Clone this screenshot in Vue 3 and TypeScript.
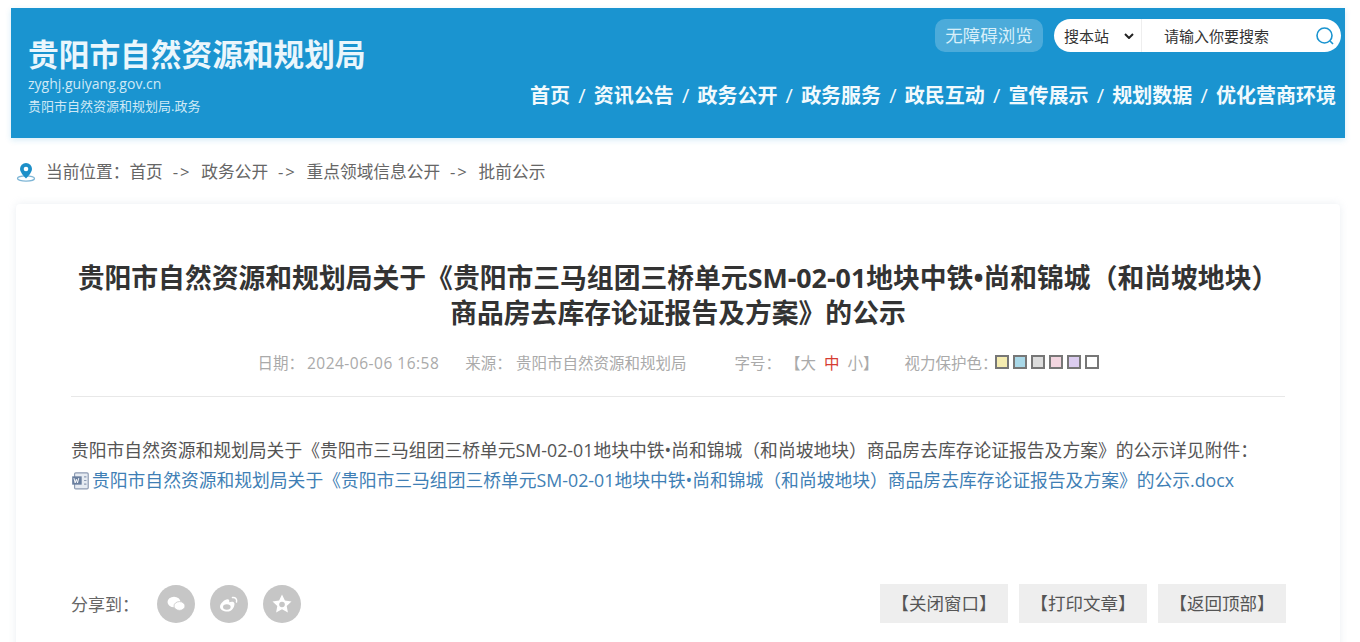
<script setup lang="ts">
const navItems = ['首页', '资讯公告', '政务公开', '政务服务', '政民互动', '宣传展示', '规划数据', '优化营商环境']
const crumbs = ['首页', '政务公开', '重点领域信息公开', '批前公示']
const swatches = ['#f5ecb0', '#a9d8e8', '#dddddd', '#f3d6e0', '#dccdf0', '#ffffff']
const actions = ['【关闭窗口】', '【打印文章】', '【返回顶部】']
const fullTitle = '贵阳市自然资源和规划局关于《贵阳市三马组团三桥单元SM-02-01地块中铁•尚和锦城（和尚坡地块）商品房去库存论证报告及方案》的公示'
</script>

<template>
  <div class="page">
    <header class="banner">
      <div class="brand">
        <h1 class="brand__name">贵阳市自然资源和规划局</h1>
        <div class="brand__url">zyghj.guiyang.gov.cn</div>
        <div class="brand__sub">贵阳市自然资源和规划局.政务</div>
      </div>
      <div class="banner__right">
        <div class="tools">
          <span class="tools__access">无障碍浏览</span>
          <div class="search">
            <span class="search__scope">搜本站
              <svg class="search__caret" viewBox="0 0 10 6" aria-hidden="true"><path d="M1 1l4 4 4-4" fill="none" stroke="#222" stroke-width="2" /></svg>
            </span>
            <span class="search__input">请输入你要搜索</span>
            <svg class="search__icon" viewBox="0 0 20 20" fill="none" stroke="#1a94d0" stroke-width="1.6" aria-hidden="true">
              <circle cx="9.5" cy="9.5" r="7.5" />
              <path d="M15 15l3 3" />
            </svg>
          </div>
        </div>
        <nav class="nav">
          <template v-for="(item, i) in navItems" :key="item">
            <span v-if="i > 0" class="nav__sep">/</span>
            <a class="nav__link">{{ item }}</a>
          </template>
        </nav>
      </div>
    </header>

    <div class="crumbs">
      <svg class="crumbs__pin" viewBox="0 0 20 20" aria-hidden="true">
        <ellipse cx="10" cy="16.5" rx="8.5" ry="2.6" fill="none" stroke="#7fb6d6" stroke-width="1.3" />
        <path d="M10 1a6 6 0 0 0-6 6c0 3.8 6 9.500 6 9.500s6-5.700 6-9.500a6 6 0 0 0-6-6z" fill="#1d8fc8" />
        <circle cx="10" cy="7" r="2.300" fill="#fff" />
      </svg>
      <span>当前位置：</span>
      <template v-for="(c, i) in crumbs" :key="c">
        <span v-if="i > 0" class="crumbs__arrow">-&gt;</span>
        <span>{{ c }}</span>
      </template>
    </div>

    <main class="card">
      <h2 class="title">贵阳市自然资源和规划局关于《贵阳市三马组团三桥单元SM-02-01地块中铁•尚和锦城（和尚坡地块）<br />商品房去库存论证报告及方案》的公示</h2>

      <div class="meta">
        <span class="meta__date">日期：<span class="meta__time">2024-06-06 16:58</span></span>
        <span class="meta__source">来源：&nbsp;贵阳市自然资源和规划局</span>
        <span class="meta__size">字号：&nbsp;【大 &nbsp;<b class="meta__mid">中</b>&nbsp; 小】</span>
        <span class="meta__eye">视力保护色：</span>
        <span class="swatches">
          <i v-for="s in swatches" :key="s" class="swatch" :style="{ background: s }"></i>
        </span>
      </div>

      <div class="body">
        <p class="body__line">{{ fullTitle }}详见附件：</p>
        <a class="body__file">
          <svg class="body__doc" viewBox="0 0 16 16" aria-hidden="true">
            <rect x="3" y="1.5" width="11.5" height="13.5" rx="1" fill="#e6ebf2" stroke="#8d9bb2" />
            <rect x="1" y="4.5" width="8" height="7" fill="#6a7f9f" />
            <path d="M2.500 6l1 4 1-3 1 3 1-4" fill="none" stroke="#fff" stroke-width=".8" />
            <path d="M11 5h2M11 8h2M11 11h2" stroke="#8d9bb2" />
          </svg>{{ fullTitle }}.docx</a>
      </div>

      <div class="foot">
        <div class="share">
          <span class="share__label">分享到：</span>
          <span class="share__btn">
            <svg viewBox="0 0 24 24" fill="#fff" aria-hidden="true">
              <ellipse cx="10" cy="10" rx="6.500" ry="5.200" />
              <ellipse cx="15.500" cy="14" rx="5.500" ry="4.400" stroke="#c6c6c6" stroke-width=".8" />
            </svg>
          </span>
          <span class="share__btn">
            <svg viewBox="0 0 24 24" aria-hidden="true">
              <path d="M10.500 19.500c-4.200 0-7.500-2-7.500-4.800 0-3 4.500-7.500 7.600-7.500 1.700 0 2 1.500 1.500 3 2.500-1 5.400-.8 5.400 1.500 0 4-3.200 7.800-7 7.800z" fill="#fff" />
              <ellipse cx="9.800" cy="15" rx="3.800" ry="2.800" fill="#c6c6c6" />
              <path d="M15.500 5.500c2.800-.5 4.800 1.800 4 4.500" fill="none" stroke="#fff" stroke-width="1.500" stroke-linecap="round" />
            </svg>
          </span>
          <span class="share__btn">
            <svg viewBox="0 0 24 24" fill="#fff" aria-hidden="true">
              <path d="M12 2.500l2.900 6 6.600.9-4.800 4.500 1.200 6.600-5.900-3.200-5.900 3.200 1.200-6.600-4.800-4.500 6.600-.9z" />
              <circle cx="12" cy="12.500" r="2.800" fill="#c6c6c6" />
            </svg>
          </span>
        </div>
        <div class="actions">
          <a v-for="a in actions" :key="a" class="actions__btn">{{ a }}</a>
        </div>
      </div>
    </main>
  </div>
</template>

<style>
html, body {
  margin: 0;
  background: #fff;
}
</style>

<style scoped>
.page {
  height: 642px;
  overflow: hidden;
  padding: 8px 15px 0 11px;
  box-sizing: border-box;
  font-family: "Open Sans", "Noto Sans CJK SC", sans-serif;
  color: #555;
}

.banner {
  height: 130px;
  background: #1a94d0;
  display: flex;
  justify-content: space-between;
  color: #fff;
  box-shadow: 0 2px 6px rgba(26, 148, 208, 0.18);
}

.brand {
  padding: 27px 0 0 17px;
}

.brand__name {
  margin: 0;
  font-size: 30.7px;
  line-height: 38px;
  font-weight: 700;
  color: #eaf6fc;
}

.brand__url {
  margin-top: 2px;
  font-size: 14px;
  line-height: 18px;
  color: #cfe9f6;
}

.brand__sub {
  margin-top: 5px;
  font-size: 13px;
  line-height: 17px;
  color: #cfe9f6;
}

.banner__right {
  display: flex;
  flex-direction: column;
  align-items: flex-end;
  padding: 11px 4px 0 0;
}

.tools {
  display: flex;
  align-items: center;
  gap: 11px;
}

.tools__access {
  width: 108px;
  height: 33px;
  line-height: 33px;
  text-align: center;
  font-size: 17.5px;
  border-radius: 10px;
  background: rgba(255, 255, 255, 0.22);
  color: #d8eff9;
}

.search {
  width: 287px;
  height: 33px;
  background: #fff;
  border-radius: 17px;
  display: flex;
  align-items: center;
  color: #333;
  font-size: 15px;
  position: relative;
}

.search__scope {
  width: 88px;
  height: 100%;
  box-sizing: border-box;
  padding-left: 10px;
  display: flex;
  align-items: center;
  gap: 15px;
  border-right: 1px solid #eee;
}

.search__caret {
  width: 10px;
  height: 6px;
}

.search__input {
  margin-left: 22px;
}

.search__icon {
  position: absolute;
  right: 6px;
  top: 7px;
  width: 20px;
  height: 20px;
}

.nav {
  display: flex;
  align-items: center;
  margin: 30px 5px 0 0;
  font-size: 20px;
  line-height: 28px;
  font-weight: 700;
  color: #f2fafd;
}

.nav__sep {
  margin: 0 8.2px;
  font-weight: 400;
}

.crumbs {
  display: flex;
  align-items: center;
  height: 30px;
  margin-top: 18px;
  padding-left: 5px;
  font-size: 16.7px;
  color: #666;
}

.crumbs__pin {
  width: 20px;
  height: 20px;
  margin: 1px 10px 0 0;
}

.crumbs__arrow {
  margin: 0 10px;
  letter-spacing: 1.8px;
}

.card {
  margin: 18px 0 0 5px;
  padding: 56px 55px 0;
  width: 1324px;
  box-sizing: border-box;
  height: 460px;
  border-radius: 4px;
  box-shadow: 0 0 8px rgba(150, 170, 190, 0.2);
}

.title {
  margin: 0;
  text-align: center;
  font-size: 26.8px;
  line-height: 35px;
  font-weight: 700;
  color: #333;
  white-space: nowrap;
}

.meta {
  display: flex;
  align-items: center;
  justify-content: center;
  height: 24px;
  margin-top: 20px;
  padding-bottom: 22px;
  border-bottom: 1px solid #e8e8e8;
  font-size: 15.5px;
  color: #aaa;
  white-space: nowrap;
}

.meta__time {
  margin-left: 3px;
  letter-spacing: 0.5px;
}

.meta__source {
  margin-left: 26px;
}

.meta__size {
  margin-left: 48px;
}

.meta__mid {
  color: #d63c32;
  font-weight: 400;
}

.meta__eye {
  margin-left: 26px;
}

.swatches {
  display: flex;
  gap: 4px;
  margin-left: -3px;
}

.swatch {
  width: 14px;
  height: 14px;
  box-sizing: border-box;
  border: 2px solid #777;
  display: block;
}

.body {
  margin-top: 38px;
  font-size: 17.8px;
  line-height: 30px;
  white-space: nowrap;
}

.body__line {
  margin: 0;
  color: #555;
}

.body__file {
  color: #3f7fb5;
  display: flex;
  align-items: center;
}

.body__doc {
  width: 19px;
  height: 19px;
  margin-right: 2px;
  flex: none;
}

.foot {
  display: flex;
  justify-content: space-between;
  align-items: center;
  margin-top: 89px;
}

.share {
  display: flex;
  align-items: center;
  gap: 15px;
}

.share__label {
  font-size: 17px;
  width: 71px;
  color: #666;
}

.share__btn {
  width: 38px;
  height: 38px;
  border-radius: 50%;
  background: #c6c6c6;
  display: grid;
  place-items: center;
}

.share__btn svg {
  width: 24px;
  height: 24px;
}

.actions {
  display: flex;
  gap: 11px;
  margin-right: -1px;
}

.actions__btn {
  width: 128px;
  height: 39px;
  line-height: 39px;
  text-align: center;
  background: #eee;
  color: #555;
  font-size: 17.5px;
}
</style>
